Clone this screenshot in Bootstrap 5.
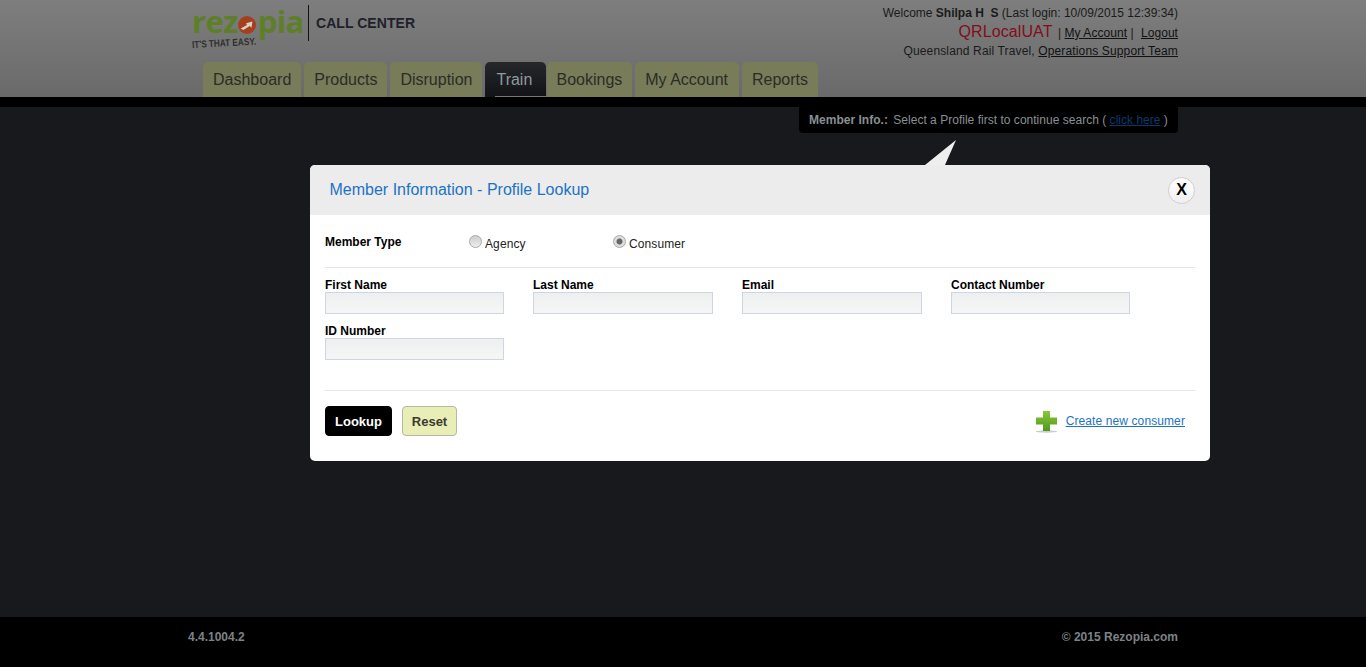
<!DOCTYPE html>
<html lang="en">
<head>
    <meta charset="UTF-8">
    <meta name="viewport" content="width=device-width, initial-scale=1.0">
    <title>Rezopia Call Center</title>
    <link href="https://cdn.jsdelivr.net/npm/bootstrap@5.3.0/dist/css/bootstrap.min.css" rel="stylesheet">
    <style>
        html, body { height: 100%; }
        body {
            font-family: "Liberation Sans", Arial, sans-serif;
            font-size: 12px;
            color: #111;
            background: #17191c;
            overflow: hidden;
        }
        .page-wrap { width: 990px; margin: 0 auto; }

        /* header (dimmed by the lookup overlay) */
        .top-head { height: 97px; background: linear-gradient(#7e7e7e, #6a6a6a); }
        .top-head .page-wrap { height: 97px; }
        .head-row { height: 62px; }
        .brand-box { width: 120px; padding: 6px 0 0 4px; }
        .brand-word {
            font-family: "Open Sans", "Liberation Sans", sans-serif;
            font-weight: 700;
            font-size: 31px;
            line-height: 30px;
            color: #5d7f27;
            letter-spacing: -0.6px;
            white-space: nowrap;
        }
        .brand-o { width: 18px; height: 18px; margin: 0 2px 0 0; vertical-align: -1px; }
        .brand-tag {
            font-size: 10px;
            line-height: 12px;
            color: #2e2e2e;
            transform: rotate(-3deg) scaleX(.82);
            transform-origin: left center;
            white-space: nowrap;
            margin-top: 3px;
            font-weight: 700;
        }
        .brand-app {
            border-left: 1px solid #111;
            height: 36px;
            margin-top: 5px;
            padding-left: 7px;
            font-size: 14px;
            line-height: 36px;
            font-weight: 700;
            color: #20212a;
            letter-spacing: .05px;
        }
        .user-box { text-align: right; color: #1a1a1a; line-height: 18px; padding-top: 4px; }
        .user-box a { color: #111; }
        .user-box .site-name { font-size: 16px; color: #7f0f1c; margin-right: 2px; letter-spacing: .1px; }
        .user-line { height: 18px; }
        .user-line.is-mid { height: 20px; padding-top: 1px; letter-spacing: .05px; }
        .user-line.is-last { letter-spacing: .14px; }
        .tab-row { padding-left: 15px; gap: 3px; }
        .tab-item {
            height: 35px;
            padding: 0 10px;
            font-size: 16px;
            line-height: 35px;
            color: #2b2c28;
            background: #787c59;
            border-radius: 5px 5px 0 0;
            text-decoration: none;
        }
        .tab-item.is-on { position: relative; z-index: 1; width: 61px; margin-right: -2px; background: linear-gradient(#26272b, #121316); color: #8f9aa0; padding: 0 11px; }
        .tab-item.is-on::after { content: ""; position: absolute; left: 10px; right: 0; bottom: 0; height: 1px; background: #777; }
        .tab-item.tab-bk { padding-left: 9px; }
        .tab-item.tab-ac { padding-right: 11px; }

        .black-bar { height: 10px; background: #000; }
        .main-area { position: relative; height: 510px; }

        /* member info strip */
        .member-tip {
            position: absolute;
            top: 0;
            left: 799px;
            width: 379px;
            height: 26px;
            padding-left: 10px;
            line-height: 26px;
            color: #8a8f93;
            background: #000;
            border-radius: 0 0 4px 4px;
            white-space: nowrap;
            letter-spacing: .02px;
        }
        .member-tip b { margin-right: 2px; }
        .member-tip a { color: #073a6e; }
        .tip-arrow { position: absolute; top: 33px; left: 925px; width: 32px; height: 25px; }

        /* profile lookup dialog */
        .lookup-box {
            position: absolute;
            top: 58px;
            left: 310px;
            width: 900px;
            height: 296px;
            background: #fff;
            border-radius: 5px;
            overflow: hidden;
        }
        .lookup-head {
            height: 50px;
            padding: 0 15px 0 19.5px;
            background: #ececec;
            font-size: 16px;
            color: #1c73c4;
        }
        .close-x {
            width: 27px;
            height: 27px;
            padding: 0;
            border: 1px solid #cfcfcf;
            border-radius: 50%;
            background: linear-gradient(#fff, #f0f0f0);
            font-size: 16px;
            font-weight: 700;
            line-height: 24px;
            color: #000;
        }
        .lookup-body { padding: 0 15px; }
        .type-row { height: 53px; border-bottom: 1px solid #e6e6e6; }
        .type-label { width: 144px; font-weight: 700; color: #000; padding-top: 20px; line-height: 14px; }
        .type-opt { width: 144px; padding-top: 21px; color: #222; line-height: 16px; letter-spacing: .1px; }
        .fake-radio {
            width: 13px;
            height: 13px;
            border: 1px solid #a9a9a9;
            border-radius: 50%;
            background: linear-gradient(#ccc, #eee);
            margin-right: 3px;
            margin-top: -1px;
        }
        .fake-radio.is-on { background: radial-gradient(circle, #666 0 2.5px, #ddd 3.5px); }
        .field-grid {
            display: grid;
            grid-template-columns: 208px 209px 209px auto;
            align-content: start;
            row-gap: 10px;
            padding-top: 10px;
            height: 123px;
            border-bottom: 1px solid #e6e6e6;
        }
        .field-grid label { display: block; font-weight: 700; color: #000; line-height: 14px; }
        .field-box {
            display: block;
            width: 179px;
            height: 22px;
            border: 1px solid #cdd7e4;
            background: linear-gradient(#eeeff0, #f6f6f6);
            outline: 0;
        }
        .field-box.is-wide { width: 180px; }
        .foot-row { padding-top: 15px; height: 69px; }
        .btn-lookup, .btn-reset {
            height: 30px;
            padding: 1px 0 0;
            font-size: 13px;
            font-weight: 700;
            line-height: 27px;
            border-radius: 4px;
        }
        .btn-lookup { width: 67px; background: #000; color: #fff; border: 1px solid #000; }
        .btn-reset { width: 55px; margin-left: 10px; background: #e9edb6; color: #3b3b30; border: 1px solid #b8b8a0; }
        .create-wrap { height: 30px; padding-right: 10px; }
        .create-wrap a { color: #1c73c4; letter-spacing: .1px; }

        .page-foot { position: absolute; left: 0; right: 0; bottom: 0; height: 50px; background: #000; color: #7d8287; font-weight: 700; }
        .page-foot .page-wrap { height: 40px; }
    </style>
</head>
<body>
    <header class="top-head">
        <div class="page-wrap d-flex flex-column">
            <div class="head-row d-flex justify-content-between">
                <div class="d-flex">
                    <div class="brand-box">
                        <div class="brand-word">rez<svg class="brand-o" viewBox="0 0 20 20"><circle cx="10" cy="10" r="10" fill="#a5401f"/><path d="M3 14 L10 10 L9 8 L16 6 L15 13 L13 11 L6 15.5 Z" fill="#d9d2c4"/></svg>pia</div>
                        <div class="brand-tag">IT'S THAT EASY.</div>
                    </div>
                    <div class="brand-app">CALL CENTER</div>
                </div>
                <div class="user-box">
                    <div class="user-line">Welcome <b>Shilpa H&nbsp; S</b> (Last login: 10/09/2015 12:39:34)</div>
                    <div class="user-line is-mid"><span class="site-name">QRLocalUAT</span> | <a href="#">My Account</a> |&nbsp;<a href="#" class="ms-1">Logout</a></div>
                    <div class="user-line is-last">Queensland Rail Travel, <a href="#">Operations Support Team</a></div>
                </div>
            </div>
            <nav class="tab-row d-flex">
                <a class="tab-item" href="#">Dashboard</a>
                <a class="tab-item" href="#">Products</a>
                <a class="tab-item" href="#">Disruption</a>
                <a class="tab-item is-on" href="#">Train</a>
                <a class="tab-item tab-bk" href="#">Bookings</a>
                <a class="tab-item tab-ac" href="#">My Account</a>
                <a class="tab-item" href="#">Reports</a>
            </nav>
        </div>
    </header>
    <div class="black-bar"></div>

    <main class="main-area">
        <div class="member-tip"><b>Member Info.:</b> Select a Profile first to continue search ( <a href="#">click here</a> )</div>
        <svg class="tip-arrow" viewBox="0 0 32 25"><path d="M31 0 L0 25 L20 25 Z" fill="#eeeeee"/></svg>

        <section class="lookup-box">
            <div class="lookup-head d-flex align-items-center justify-content-between">
                <span>Member Information - Profile Lookup</span>
                <button class="close-x" type="button">X</button>
            </div>
            <div class="lookup-body">
                <div class="type-row d-flex">
                    <div class="type-label">Member Type</div>
                    <div class="type-opt d-flex"><span class="fake-radio"></span><span>Agency</span></div>
                    <div class="type-opt d-flex"><span class="fake-radio is-on"></span><span>Consumer</span></div>
                </div>
                <div class="field-grid">
                    <div><label>First Name</label><input class="field-box" type="text"></div>
                    <div><label>Last Name</label><input class="field-box is-wide" type="text"></div>
                    <div><label>Email</label><input class="field-box is-wide" type="text"></div>
                    <div><label>Contact Number</label><input class="field-box" type="text"></div>
                    <div><label>ID Number</label><input class="field-box" type="text"></div>
                </div>
                <div class="foot-row d-flex justify-content-between">
                    <div class="d-flex align-items-start">
                        <button class="btn-lookup" type="button">Lookup</button>
                        <button class="btn-reset" type="button">Reset</button>
                    </div>
                    <div class="create-wrap d-flex align-items-center gap-2">
                        <svg width="23" height="23" viewBox="0 0 23 23">
                            <defs><linearGradient id="plusGreen" x1="0" y1="0" x2="0" y2="1"><stop offset="0" stop-color="#8cc63a"/><stop offset="1" stop-color="#4d9a1c"/></linearGradient></defs>
                            <ellipse cx="11.5" cy="21.5" rx="11" ry="1.2" fill="#ccc"/>
                            <path d="M8 1 H15 V7.5 H22 V14.5 H15 V21 H8 V14.5 H1 V7.5 H8 Z" fill="url(#plusGreen)"/>
                        </svg>
                        <a href="#">Create new consumer</a>
                    </div>
                </div>
            </div>
        </section>
    </main>

    <footer class="page-foot">
        <div class="page-wrap d-flex align-items-center justify-content-between">
            <span>4.4.1004.2</span>
            <span>© 2015 Rezopia.com</span>
        </div>
    </footer>

    <script src="https://cdn.jsdelivr.net/npm/bootstrap@5.3.0/dist/js/bootstrap.bundle.min.js"></script>
</body>
</html>
